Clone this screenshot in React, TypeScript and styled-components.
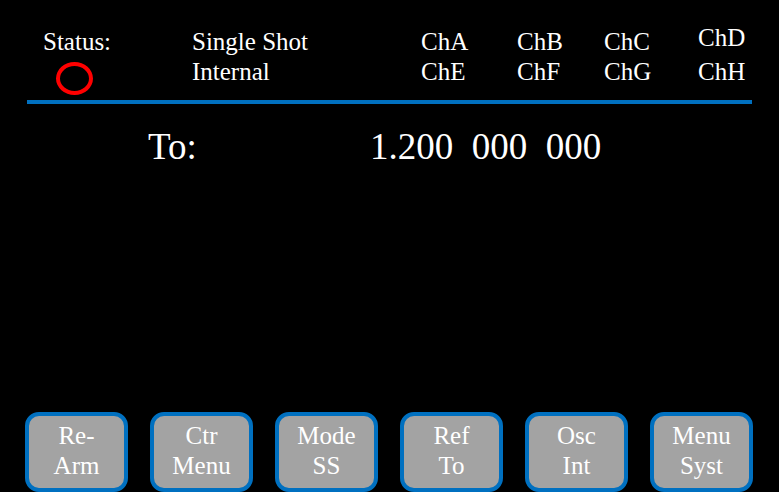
import React from "react";
import styled, { createGlobalStyle } from "styled-components";

const GlobalStyle = createGlobalStyle`
  body {
    margin: 0;
    background: #000;
  }
`;

const Screen = styled.div`
  display: flex;
  flex-direction: column;
  width: 779px;
  height: 492px;
  background: #000;
  color: #fff;
  font-family: "Liberation Serif", Tinos, "Times New Roman", "DejaVu Serif", serif;
  overflow: hidden;
`;

const Header = styled.div`
  display: grid;
  grid-template-columns: 149px 229px 96px 87px 94px auto;
  padding: 27px 0 0 43px;
  font-size: 25px;
  line-height: 30px;
`;

const Column = styled.div`
  display: flex;
  flex-direction: column;
`;

const Line = styled.span<{ $lift?: number }>`
  display: block;
  height: 30px;
  white-space: nowrap;
  position: relative;
  top: ${(p) => (p.$lift ? -p.$lift : 0)}px;
`;

const StatusLamp = styled.span`
  display: block;
  width: 29px;
  height: 25px;
  margin: 5px 0 -8px 13px;
  border: 4px solid #ff0000;
  border-radius: 50%;
`;

const Divider = styled.div`
  height: 4px;
  margin: 13px 27px 0 27px;
  background: #0070c0;
`;

const Readout = styled.div`
  display: flex;
  padding: 21px 0 0 148px;
  font-size: 37px;
  line-height: 44px;
  white-space: pre;
`;

const ReadoutLabel = styled.span`
  width: 222px;
`;

const ButtonBar = styled.div`
  display: flex;
  gap: 22px;
  margin-top: auto;
  padding-left: 25px;
`;

const SoftKey = styled.div`
  box-sizing: border-box;
  width: 103px;
  height: 80px;
  padding-top: 5px;
  border: 4px solid #0070c0;
  border-radius: 14px;
  background: #a3a3a3;
  color: #fff;
  font-size: 25px;
  line-height: 30px;
  text-align: center;
`;

const channels = [
  ["ChA", "ChE"],
  ["ChB", "ChF"],
  ["ChC", "ChG"],
  ["ChD", "ChH"],
];

const keys = [
  ["Re-", "Arm"],
  ["Ctr", "Menu"],
  ["Mode", "SS"],
  ["Ref", "To"],
  ["Osc", "Int"],
  ["Menu", "Syst"],
];

export default function App() {
  return (
    <Screen>
      <GlobalStyle />
      <Header>
        <Column>
          <Line>Status:</Line>
          <StatusLamp />
        </Column>
        <Column>
          <Line>Single Shot</Line>
          <Line>Internal</Line>
        </Column>
        {channels.map(([top, bottom], i) => (
          <Column key={top}>
            <Line $lift={i === 3 ? 4 : 0}>{top}</Line>
            <Line>{bottom}</Line>
          </Column>
        ))}
      </Header>
      <Divider />
      <Readout>
        <ReadoutLabel>To:</ReadoutLabel>
        <span>{"1.200\u00a0\u00a0000\u00a0\u00a0000"}</span>
      </Readout>
      <ButtonBar>
        {keys.map(([a, b]) => (
          <SoftKey key={a + b}>
            {a}
            <br />
            {b}
          </SoftKey>
        ))}
      </ButtonBar>
    </Screen>
  );
}
